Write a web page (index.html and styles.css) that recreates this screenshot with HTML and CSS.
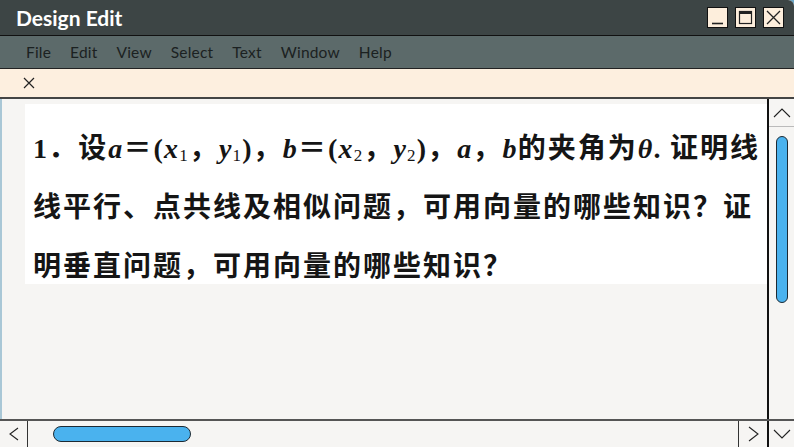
FILE: index.html
```html
<!DOCTYPE html>
<html lang="zh-CN">
<head>
    <meta charset="UTF-8">
    <meta name="viewport" content="width=device-width, initial-scale=1.0">
    <title>Design Edit</title>
    <link rel="stylesheet" href="styles.css">
</head>
<body>
    <div class="window">
        <header class="titlebar">
            <span class="title">Design Edit</span>
            <div class="controls">
                <button class="ctrl">
                    <svg width="19" height="19" viewBox="0 0 19 19"><line x1="4" y1="15.5" x2="15" y2="15.5" stroke="#222" stroke-width="1.6"/></svg>
                </button>
                <button class="ctrl">
                    <svg width="19" height="19" viewBox="0 0 19 19"><rect x="3.5" y="3.5" width="12" height="12" fill="none" stroke="#222" stroke-width="1.2"/><rect x="3" y="3" width="13" height="3" fill="#222"/></svg>
                </button>
                <button class="ctrl">
                    <svg width="19" height="19" viewBox="0 0 19 19"><path d="M3 3 L16 16 M16 3 L3 16" stroke="#222" stroke-width="1.3" fill="none"/></svg>
                </button>
            </div>
        </header>
        <nav class="menubar">
            <span>File</span>
            <span>Edit</span>
            <span>View</span>
            <span>Select</span>
            <span>Text</span>
            <span>Window</span>
            <span>Help</span>
        </nav>
        <div class="tabstrip">
            <svg class="tab-close" width="12" height="12" viewBox="0 0 12 12"><path d="M1 1 L11 11 M11 1 L1 11" stroke="#222" stroke-width="1.2" fill="none"/></svg>
        </div>
        <div class="workspace">
            <div class="canvas">
                <div class="page">
                    <p class="question"><span class="m">1</span>．设<span class="m"><i>a</i></span>＝<span class="m">(<i>x</i><span class="sub">1</span></span>，<span class="m"><i>y</i><span class="sub">1</span>)</span>，<span class="m"><i>b</i></span>＝<span class="m">(<i>x</i><span class="sub">2</span></span>，<span class="m"><i>y</i><span class="sub">2</span>)</span>，<span class="m"><i>a</i></span>，<span class="m"><i>b</i></span>的夹角为<span class="m"><i>θ</i>. </span>证明线线平行、点共线及相似问题，可用向量的哪些知识？证明垂直问题，可用向量的哪些知识？</p>
                </div>
            </div>
            <div class="vscroll">
                <div class="vbtn">
                    <svg width="18" height="10" viewBox="0 0 18 10"><polyline points="1,9 9,1 17,9" fill="none" stroke="#222" stroke-width="1.1"/></svg>
                </div>
                <div class="vtrack"><div class="vthumb"></div></div>
            </div>
        </div>
        <div class="hscroll">
            <div class="hbtn left">
                <svg width="10" height="14" viewBox="0 0 10 14"><polyline points="9,1 1,7 9,13" fill="none" stroke="#222" stroke-width="1.1"/></svg>
            </div>
            <div class="htrack"><div class="hthumb"></div></div>
            <div class="hbtn right">
                <svg width="11" height="16" viewBox="0 0 11 16"><polyline points="1,1 10,8 1,15" fill="none" stroke="#222" stroke-width="1.1"/></svg>
            </div>
            <div class="corner">
                <svg width="18" height="10" viewBox="0 0 18 10"><polyline points="1,1 9,9 17,1" fill="none" stroke="#222" stroke-width="1.1"/></svg>
            </div>
        </div>
    </div>
</body>
</html>
```

FILE: styles.css
```css
body {
    margin: 0;
    background-color: #6aa6c6;
    font-family: Lato, "Open Sans", sans-serif;
}
.window {
    width: 794px;
    height: 447px;
    display: flex;
    flex-direction: column;
    overflow: hidden;
    background-color: #f6f5f3;
    border-top-right-radius: 6px;
}
.titlebar {
    height: 35px;
    flex: none;
    display: flex;
    align-items: center;
    justify-content: space-between;
    padding: 0 10px 0 16px;
    background-color: #3d4545;
    border-bottom: 1px solid #111;
}
.title {
    color: #ffffff;
    font-size: 21px;
    font-weight: bold;
}
.controls {
    display: flex;
    gap: 7px;
}
.ctrl {
    width: 21px;
    height: 21px;
    padding: 0;
    display: flex;
    align-items: center;
    justify-content: center;
    background-color: #fdeedc;
    border: 1px solid #111;
}
.menubar {
    height: 32px;
    flex: none;
    display: flex;
    align-items: center;
    gap: 19px;
    padding-left: 26px;
    font-size: 15.5px;
    letter-spacing: 0.2px;
    color: #1b2121;
    background-color: #5c6a6a;
    border-bottom: 1px solid #222;
}
.tabstrip {
    height: 28px;
    flex: none;
    display: flex;
    align-items: center;
    padding-left: 23px;
    background-color: #fdefdf;
    border-bottom: 2px solid #444;
}
.workspace {
    flex: 1;
    display: flex;
    min-height: 0;
    border-left: 2px solid #a9c7d6;
}
.canvas {
    flex: 1;
    padding: 5px 0 0 23px;
}
.page {
    height: 167px;
    padding: 13px 0 0 8px;
    overflow: hidden;
    background-color: #ffffff;
}
.question {
    margin: 0;
    font-family: "Noto Sans CJK SC", sans-serif;
    font-weight: bold;
    font-size: 28px;
    letter-spacing: 2px;
    line-height: 59px;
    color: #151515;
}
.question .m {
    font-family: "Liberation Serif", serif;
    letter-spacing: 1.2px;
    line-height: 1;
}
.question .sub {
    font-size: 17px;
    font-weight: normal;
    vertical-align: -3px;
}
.vscroll {
    width: 25px;
    display: flex;
    flex-direction: column;
    border-left: 2px solid #111;
}
.vbtn {
    height: 27px;
    display: flex;
    align-items: center;
    justify-content: center;
    border-bottom: 1px solid #bbb;
}
.vtrack {
    flex: 1;
    padding-top: 9px;
    display: flex;
    justify-content: center;
}
.vthumb {
    width: 10px;
    height: 165px;
    border: 1px solid #1d2a33;
    border-radius: 6px;
    background-color: #4ab2ee;
}
.hscroll {
    height: 26px;
    flex: none;
    display: flex;
    border-top: 2px solid #555;
}
.hbtn {
    display: flex;
    align-items: center;
    justify-content: center;
}
.hbtn.left {
    width: 27px;
    border-right: 1px solid #333;
}
.hbtn.right {
    width: 28px;
    border-left: 1px solid #333;
}
.htrack {
    flex: 1;
    padding-left: 25px;
    display: flex;
    align-items: center;
}
.hthumb {
    width: 136px;
    height: 14px;
    border: 1px solid #1d2a33;
    border-radius: 8px;
    background-color: #4ab2ee;
}
.corner {
    width: 25px;
    display: flex;
    align-items: center;
    justify-content: center;
    border-left: 2px solid #111;
}
```
